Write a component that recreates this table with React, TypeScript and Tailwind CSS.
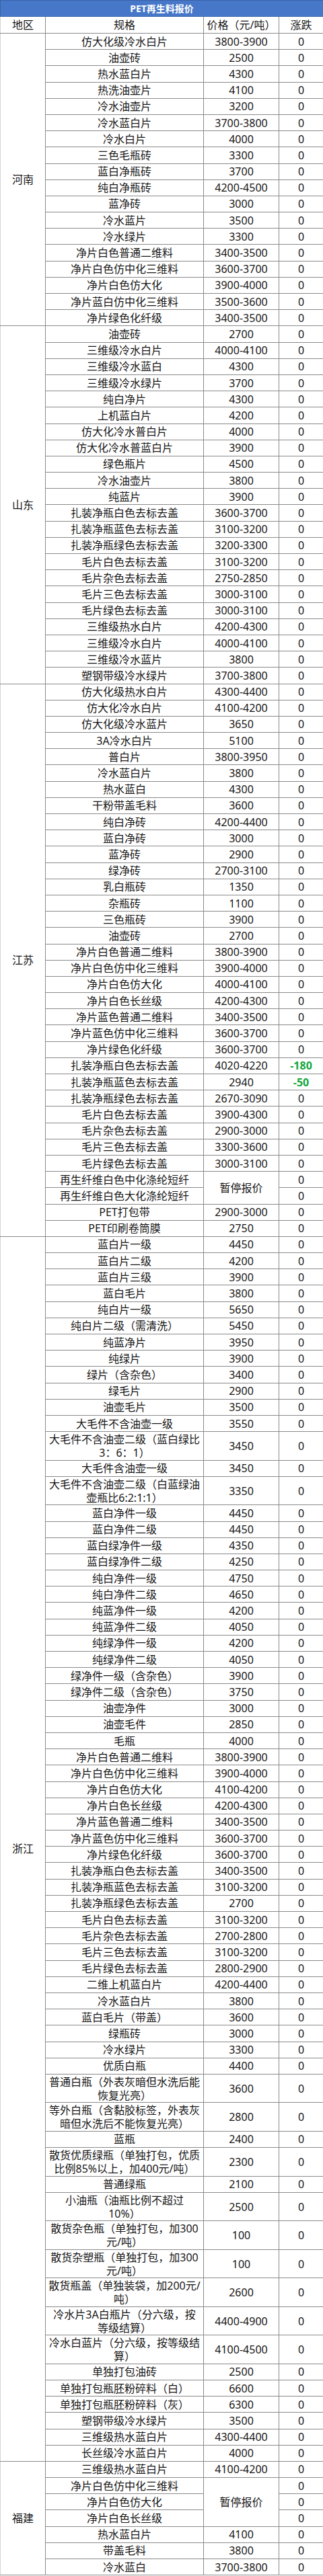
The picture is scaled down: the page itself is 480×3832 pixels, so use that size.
import React from 'react';

// [规格, 价格 (null = merged with row above), 涨跌, 价格 rowSpan]
type Row = [string, string | null, string?, number?];

interface Region {
    name: string;
    rows: Row[];
}

const regions: Region[] = [
    {
        name: '河南',
        rows: [
            ['仿大化级冷水白片', '3800-3900'],
            ['油壶砖', '2500'],
            ['热水蓝白片', '4300'],
            ['热洗油壶片', '4100'],
            ['冷水油壶片', '3200'],
            ['冷水蓝白片', '3700-3800'],
            ['冷水白片', '4000'],
            ['三色毛瓶砖', '3300'],
            ['蓝白净瓶砖', '3700'],
            ['纯白净瓶砖', '4200-4500'],
            ['蓝净砖', '3000'],
            ['冷水蓝片', '3500'],
            ['冷水绿片', '3300'],
            ['净片白色普通二维料', '3400-3500'],
            ['净片白色仿中化三维料', '3600-3700'],
            ['净片白色仿大化', '3900-4000'],
            ['净片蓝白仿中化三维料', '3500-3600'],
            ['净片绿色化纤级', '3400-3500'],
        ],
    },
    {
        name: '山东',
        rows: [
            ['油壶砖', '2700'],
            ['三维级冷水白片', '4000-4100'],
            ['三维级冷水蓝白', '4300'],
            ['三维级冷水绿片', '3700'],
            ['纯白净片', '4300'],
            ['上机蓝白片', '4200'],
            ['仿大化冷水普白片', '4000'],
            ['仿大化冷水普蓝白片', '3900'],
            ['绿色瓶片', '4500'],
            ['冷水油壶片', '3800'],
            ['纯蓝片', '3900'],
            ['扎装净瓶白色去标去盖', '3600-3700'],
            ['扎装净瓶蓝色去标去盖', '3100-3200'],
            ['扎装净瓶绿色去标去盖', '3200-3300'],
            ['毛片白色去标去盖', '3100-3200'],
            ['毛片杂色去标去盖', '2750-2850'],
            ['毛片三色去标去盖', '3000-3100'],
            ['毛片绿色去标去盖', '3000-3100'],
            ['三维级热水白片', '4200-4300'],
            ['三维级冷水白片', '4000-4100'],
            ['三维级冷水蓝片', '3800'],
            ['塑钢带级冷水绿片', '3700-3800'],
        ],
    },
    {
        name: '江苏',
        rows: [
            ['仿大化级热水白片', '4300-4400'],
            ['仿大化冷水白片', '4100-4200'],
            ['仿大化级冷水蓝片', '3650'],
            ['3A冷水白片', '5100'],
            ['普白片', '3800-3950'],
            ['冷水蓝白片', '3800'],
            ['热水蓝白', '4300'],
            ['干粉带盖毛料', '3600'],
            ['纯白净砖', '4200-4400'],
            ['蓝白净砖', '3000'],
            ['蓝净砖', '2900'],
            ['绿净砖', '2700-3100'],
            ['乳白瓶砖', '1350'],
            ['杂瓶砖', '1100'],
            ['三色瓶砖', '3900'],
            ['油壶砖', '2700'],
            ['净片白色普通二维料', '3800-3900'],
            ['净片白色仿中化三维料', '3900-4000'],
            ['净片白色仿大化', '4000-4100'],
            ['净片白色长丝级', '4200-4300'],
            ['净片蓝色普通二维料', '3400-3500'],
            ['净片蓝色仿中化三维料', '3600-3700'],
            ['净片绿色化纤级', '3600-3700'],
            ['扎装净瓶白色去标去盖', '4020-4220', '-180'],
            ['扎装净瓶蓝色去标去盖', '2940', '-50'],
            ['扎装净瓶绿色去标去盖', '2670-3090'],
            ['毛片白色去标去盖', '3900-4300'],
            ['毛片杂色去标去盖', '2900-3000'],
            ['毛片三色去标去盖', '3300-3600'],
            ['毛片绿色去标去盖', '3000-3100'],
            ['再生纤维白色中化涤纶短纤', '暂停报价', '0', 2],
            ['再生纤维白色大化涤纶短纤', null],
            ['PET打包带', '2900-3000'],
            ['PET印刷卷筒膜', '2750'],
        ],
    },
    {
        name: '浙江',
        rows: [
            ['蓝白片一级', '4450'],
            ['蓝白片二级', '4200'],
            ['蓝白片三级', '3900'],
            ['蓝白毛片', '3800'],
            ['纯白片一级', '5650'],
            ['纯白片二级（需清洗）', '5450'],
            ['纯蓝净片', '3950'],
            ['纯绿片', '3900'],
            ['绿片（含杂色）', '3400'],
            ['绿毛片', '2900'],
            ['油壶毛片', '3500'],
            ['大毛件不含油壶一级', '3550'],
            ['大毛件不含油壶二级（蓝白绿比\n3：6：1）', '3450'],
            ['大毛件含油壶一级', '3450'],
            ['大毛件不含油壶二级（白蓝绿油\n壶瓶比6:2:1:1）', '3350'],
            ['蓝白净件一级', '4450'],
            ['蓝白净件二级', '4450'],
            ['蓝白绿净件一级', '4350'],
            ['蓝白绿净件二级', '4250'],
            ['纯白净件一级', '4750'],
            ['纯白净件二级', '4650'],
            ['纯蓝净件一级', '4200'],
            ['纯蓝净件二级', '4050'],
            ['纯绿净件一级', '4200'],
            ['纯绿净件二级', '4050'],
            ['绿净件一级（含杂色）', '3900'],
            ['绿净件二级（含杂色）', '3750'],
            ['油壶净件', '3000'],
            ['油壶毛件', '2850'],
            ['毛瓶', '4000'],
            ['净片白色普通二维料', '3800-3900'],
            ['净片白色仿中化三维料', '3900-4000'],
            ['净片白色仿大化', '4100-4200'],
            ['净片白色长丝级', '4200-4300'],
            ['净片蓝色普通二维料', '3400-3500'],
            ['净片蓝色仿中化三维料', '3600-3700'],
            ['净片绿色化纤级', '3600-3700'],
            ['扎装净瓶白色去标去盖', '3400-3500'],
            ['扎装净瓶蓝色去标去盖', '3100-3200'],
            ['扎装净瓶绿色去标去盖', '2700'],
            ['毛片白色去标去盖', '3100-3200'],
            ['毛片杂色去标去盖', '2700-2800'],
            ['毛片三色去标去盖', '3100-3200'],
            ['毛片绿色去标去盖', '2800-2900'],
            ['二维上机蓝白片', '4200-4400'],
            ['冷水蓝白片', '3800'],
            ['蓝白毛片（带盖）', '3600'],
            ['绿瓶砖', '3000'],
            ['冷水绿片', '3300'],
            ['优质白瓶', '4400'],
            ['普通白瓶（外表灰暗但水洗后能\n恢复光亮）', '3600'],
            ['等外白瓶（含黏胶标签，外表灰\n暗但水洗后不能恢复光亮）', '2800'],
            ['蓝瓶', '2400'],
            ['散货优质绿瓶（单独打包，优质\n比例85%以上，加400元/吨）', '2300'],
            ['普通绿瓶', '2100'],
            ['小油瓶（油瓶比例不超过\n10%）', '2500'],
            ['散货杂色瓶（单独打包，加300\n元/吨）', '100'],
            ['散货杂塑瓶（单独打包，加300\n元/吨）', '100'],
            ['散货瓶盖（单独装袋，加200元/\n吨）', '2600'],
            ['冷水片3A白瓶片（分六级，按\n等级结算）', '4400-4900'],
            ['冷水白蓝片（分六级，按等级结\n算）', '4100-4500'],
            ['单独打包油砖', '2500'],
            ['单独打包瓶胚粉碎料（白）', '6600'],
            ['单独打包瓶胚粉碎料（灰）', '6300'],
            ['塑钢带级冷水绿片', '3500'],
            ['三维级热水蓝白片', '4300-4400'],
            ['长丝级冷水蓝白片', '4000'],
        ],
    },
    {
        name: '福建',
        rows: [
            ['三维级热水蓝白片', '4100-4200'],
            ['净片白色仿中化三维料', '暂停报价', '0', 3],
            ['净片白色仿大化', null],
            ['净片白色长丝级', null],
            ['热水蓝白片', '4100'],
            ['带盖毛料', '3800'],
            ['冷水蓝白', '3700-3800'],
        ],
    },
];

const cell = 'border border-[#8a8a8a] p-0 text-center align-middle';

export default function App() {
    return (
        <div className="w-[480px] bg-white font-['Noto_Sans','Noto_Sans_CJK_SC',sans-serif] text-[16px] leading-[20px] text-[#161616]">
            <table className="w-[480px] table-fixed border-collapse">
                <colgroup>
                    <col className="w-[67px]" />
                    <col className="w-[235px]" />
                    <col className="w-[112px]" />
                    <col className="w-[66px]" />
                </colgroup>
                <thead>
                    <tr className="h-[24px]">
                        <th
                            colSpan={4}
                            className="border border-[#3a64a8] bg-[#4677c8] p-0 text-center align-middle text-[14px] font-bold text-white"
                        >
                            PET再生料报价
                        </th>
                    </tr>
                    <tr className="h-[25px]">
                        <th className={`${cell} border-l-[#d4d4d4] font-normal`}>地区</th>
                        <th className={`${cell} font-normal`}>规格</th>
                        <th className={`${cell} font-normal`}>价格（元/吨）</th>
                        <th className={`${cell} font-normal`}>涨跌</th>
                    </tr>
                </thead>
                <tbody>
                    {regions.map((region) =>
                        region.rows.map(([spec, price, change = '0', span = 1], i) => {
                            const tall = spec.includes('\n');
                            const down = change.startsWith('-');
                            return (
                                <tr key={region.name + i} className={tall ? 'h-[42.5px]' : 'h-[24.2px]'}>
                                    {i === 0 && (
                                        <td rowSpan={region.rows.length} className={`${cell} border-l-[#d4d4d4]`}>
                                            {region.name}
                                        </td>
                                    )}
                                    <td className={`${cell} whitespace-pre-line px-[2px]`}>{spec}</td>
                                    {price !== null && (
                                        <td rowSpan={span} className={cell}>
                                            {price}
                                        </td>
                                    )}
                                    <td className={`${cell} ${down ? 'font-bold text-[#14a83c]' : ''}`}>{change}</td>
                                </tr>
                            );
                        })
                    )}
                </tbody>
            </table>
        </div>
    );
}
